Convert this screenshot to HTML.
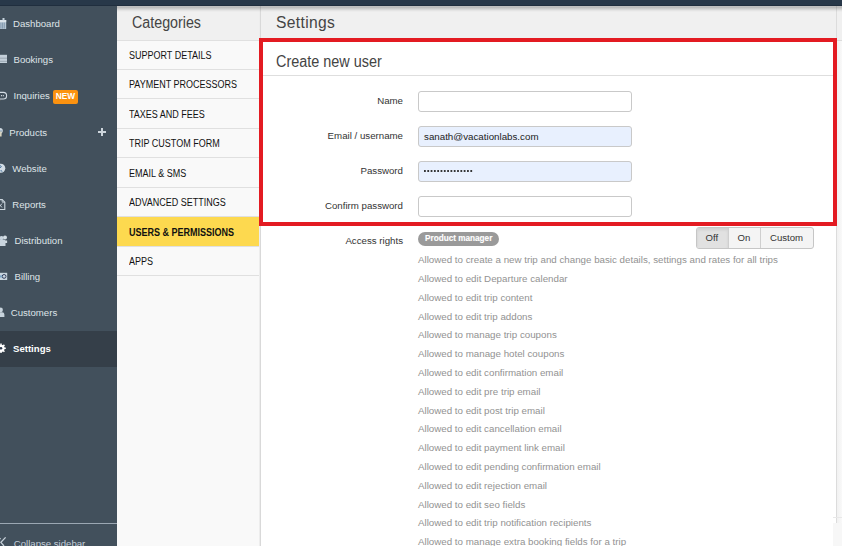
<!DOCTYPE html>
<html><head><meta charset="utf-8">
<style>
*{box-sizing:border-box;margin:0;padding:0}
html,body{width:842px;height:546px;overflow:hidden;background:#fff;font-family:"Liberation Sans",sans-serif}
.a{position:absolute;white-space:nowrap}
.topbar{position:absolute;left:0;top:0;width:842px;height:6px;background:#283849;border-bottom:1px solid #202e3e}
.sidebar{position:absolute;left:0;top:6px;width:117px;height:540px;background:#42505c}
.nt{position:absolute;white-space:nowrap;color:#dfe4e8;font-size:9.6px;line-height:12px}
.act{position:absolute;left:0;top:331px;width:117px;height:36px;background:#353f49}
.newb{position:absolute;left:53px;top:90px;width:25px;height:14px;background:#fb9210;border-radius:2px;color:#fff;font-weight:bold;font-size:8.3px;line-height:12px;text-align:center}
.collapse{position:absolute;left:0;top:523px;width:117px;height:1px;background:#9ba7b3}
.cat{position:absolute;left:117px;top:6px;width:142px;height:540px;background:#f9f9f9}
.catborder{position:absolute;left:259px;top:6px;width:2px;height:540px;background:linear-gradient(90deg,#ededed 50%,#d9d9d9 50%)}
.cathead{position:absolute;left:117px;top:6px;width:142px;height:34px;background:#f0f0f0}
.hl{position:absolute;height:1px;background:#e0e0e0}
.ct{position:absolute;left:128.5px;font-size:10px;line-height:12px;color:#111;transform:scaleX(0.9);transform-origin:0 0;white-space:nowrap}
.sel{position:absolute;left:117px;top:217px;width:142px;height:29px;background:#fdd94f}
.mainhead{position:absolute;left:261px;top:6px;width:581px;height:34px;background:#f0f0f0}
.shadow{position:absolute;left:117px;top:6px;width:725px;height:6px;background:linear-gradient(rgba(0,0,0,0.2),rgba(0,0,0,0.21) 1.5px,rgba(0,0,0,0.13) 3px,rgba(0,0,0,0.05) 4.5px,rgba(0,0,0,0) 6px)}
.h1{position:absolute;font-size:15.6px;line-height:18px;color:#444;white-space:nowrap}
.redbox{position:absolute;left:259px;top:38px;width:578px;height:188px;border:4px solid #e31b22}
.sep{position:absolute;left:263px;top:75px;width:570px;height:1px;background:#dedede}
.lbl{position:absolute;left:200px;width:203px;text-align:right;font-size:9.7px;line-height:12px;color:#333;white-space:nowrap}
.inp{position:absolute;left:418px;width:214px;height:20.5px;border:1px solid #c9c9c9;border-radius:3px;background:#fff}
.inp.fill{background:#e8f0fe}
.it{position:absolute;font-size:9.75px;line-height:12px;color:#222;white-space:nowrap}
.perm{position:absolute;left:418px;font-size:9.75px;line-height:12px;color:#929292;white-space:nowrap}
.badge{position:absolute;left:418px;top:232px;width:81px;height:14px;background:#9a9a9a;border-radius:7px}
.bt{position:absolute;left:425px;top:231.5px;-webkit-text-stroke:0.15px #fff;width:68px;font-weight:bold;font-size:8.2px;line-height:14px;color:#fff;white-space:nowrap}
.btng{position:absolute;left:696px;top:227px;width:118px;height:21.5px;border:1px solid #c6c6c6;border-radius:3px;background:#f4f4f4;overflow:hidden}
.boff{position:absolute;left:0;top:0;width:30.6px;height:20px;background:#e1e1e1;box-shadow:inset 0 2px 3px rgba(0,0,0,0.08)}
.bsep{position:absolute;top:0;width:1px;height:20px;background:#cfcfcf}
.btt{position:absolute;font-size:9.6px;line-height:12px;color:#333;white-space:nowrap}
.rscroll{position:absolute;left:836px;top:41px;width:6px;height:482px;background:linear-gradient(90deg,#f0f0f0,#f9f9f9)}
.rline{position:absolute;left:836px;top:6px;width:1px;height:517px;background:#dcdcdc}
.rbot{position:absolute;left:833px;top:523px;width:9px;height:23px;background:#f7f7f7}
</style></head><body>
<div class="topbar"></div>
<div class="sidebar"></div>
<div class="act"></div>

<!-- sidebar icons -->
<svg class="a" style="left:0;top:0" width="12" height="546" viewBox="0 0 12 546">
<g>
<rect x="-2" y="20" width="8.2" height="9" rx="0.6" fill="#b6c6d4"/><rect x="-2" y="20" width="8.2" height="2.2" fill="#dde5eb"/>
<path d="M0.9 22.6v6M2.6 22.6v6M4.3 22.6v6" stroke="#6d87a0" stroke-width="0.7"/><rect x="2.5" y="18" width="2" height="2.4" fill="#c5d3de"/>
<rect x="-1" y="54.8" width="8" height="8.2" fill="#c3cfd9"/><path d="M-1 58.2h8M-1 61.3h8" stroke="#7d8c99" stroke-width="0.6"/>
<rect x="-4" y="92.4" width="10.6" height="6.6" rx="3.3" fill="none" stroke="#d3dce4" stroke-width="1.1"/><circle cx="1.5" cy="95.7" r="0.6" fill="#e3eaef"/><circle cx="3.3" cy="95.7" r="0.6" fill="#e3eaef"/><path d="M-1 99l1.2 1" stroke="#b0a070" stroke-width="0.8"/>
<circle cx="0" cy="130.8" r="2.8" fill="#cfd9e1"/><rect x="-1" y="131" width="2.6" height="5.5" fill="#d8d4c0"/><path d="M-1 131h3" stroke="#6f90b0" stroke-width="0.8"/>
<circle cx="0.8" cy="168.3" r="4.5" fill="#d2dce4"/><path d="M-2 166.5c1 -1.2 2.5 -1 3.2 -0.2c0.6 0.8 -1 1.5 -2.2 1.5M0.5 170.8c0.8 -0.5 1.6 0 1.4 0.9" stroke="#3d6a96" stroke-width="1" fill="none"/>
<path d="M-3 199.6h5.2l2.6 2.6v7.3h-7.8z" fill="none" stroke="#cbd6de" stroke-width="1.1"/><path d="M-1 203.5l3 4M2 203.5l-3 4" stroke="#c4cfd8" stroke-width="0.9"/><path d="M2.2 199.6v2.6h2.6" fill="none" stroke="#cbd6de" stroke-width="0.9"/>
<path d="M-1 246v-4.5a2 2 0 0 1 2 -2h2.5a2 2 0 0 1 2 2v4.5z" fill="#c8d4de"/><circle cx="1.6" cy="238" r="2" fill="#c8d4de"/><circle cx="5" cy="237.4" r="2" fill="#d3dde4"/><path d="M4.5 240.5h2.6v2.5h-2z" fill="#cdd8e0"/>
<rect x="-1" y="272.8" width="8.2" height="7.2" fill="#c9d5de"/><circle cx="4.1" cy="276.4" r="1.9" fill="none" stroke="#303d5c" stroke-width="1"/><circle cx="1" cy="276.4" r="1.2" fill="#7aa2c4"/>
<circle cx="0.6" cy="309.9" r="2.3" fill="#c7d3dc"/><path d="M-3 317v-2.4a2.4 2.4 0 0 1 2.4 -2.4h2.6a2.4 2.4 0 0 1 2.4 2.4v2.4z" fill="#c7d3dc"/>
<circle cx="1" cy="348.3" r="3.6" fill="#fff"/><path d="M1 343.5v9.6M-3.8 348.3h9.6M-2.4 344.9l6.8 6.8M4.4 344.9l-6.8 6.8" stroke="#fff" stroke-width="1.5"/><circle cx="1" cy="348.3" r="1.3" fill="#2e3a4e"/>
</g></svg>

<div class="nt" style="left:13px;top:17.6px">Dashboard</div>
<div class="nt" style="left:13.5px;top:53.6px">Bookings</div>
<div class="nt" style="left:13.5px;top:89.8px">Inquiries</div>
<div class="newb">NEW</div>
<div class="nt" style="left:9.3px;top:126.5px">Products</div>
<svg class="a" style="left:97px;top:127px" width="10" height="10" viewBox="0 0 10 10"><path d="M1 5h8M5 1v8" stroke="#cdd5dc" stroke-width="2"/></svg>
<div class="nt" style="left:12.3px;top:162.6px">Website</div>
<div class="nt" style="left:12.3px;top:198.9px">Reports</div>
<div class="nt" style="left:14.5px;top:234.6px">Distribution</div>
<div class="nt" style="left:14.5px;top:270.9px">Billing</div>
<div class="nt" style="left:10.8px;top:306.8px">Customers</div>
<div class="nt" style="left:13px;top:342.9px;color:#fff;font-weight:bold">Settings</div>
<div class="collapse"></div>
<svg class="a" style="left:0;top:530px" width="8" height="16" viewBox="0 0 8 16"><path d="M5.6 7.4 L0.9 12.3 L4 16" fill="none" stroke="#c7d1da" stroke-width="1.3"/><path d="M-1 7.5L0.6 9" stroke="#c7d1da" stroke-width="1.1"/></svg>
<div class="nt" style="left:13.8px;top:538px;color:#c4ced8">Collapse sidebar</div>

<!-- categories -->
<div class="cat"></div>
<div class="cathead"></div>
<div class="catborder"></div>
<div class="h1" style="left:132.3px;top:13.5px;transform:scaleX(0.915);transform-origin:0 0">Categories</div>
<div class="hl" style="left:117px;top:40px;width:142px"></div>
<div class="hl" style="left:117px;top:69px;width:142px"></div>
<div class="hl" style="left:117px;top:98px;width:142px"></div>
<div class="hl" style="left:117px;top:128px;width:142px"></div>
<div class="hl" style="left:117px;top:157px;width:142px"></div>
<div class="hl" style="left:117px;top:187px;width:142px"></div>
<div class="hl" style="left:117px;top:216px;width:142px"></div>
<div class="sel"></div>
<div class="hl" style="left:117px;top:246px;width:142px"></div>
<div class="hl" style="left:117px;top:275px;width:142px"></div>
<div class="ct" style="top:49.6px">SUPPORT DETAILS</div>
<div class="ct" style="top:78.7px">PAYMENT PROCESSORS</div>
<div class="ct" style="top:108.5px">TAXES AND FEES</div>
<div class="ct" style="top:137.8px">TRIP CUSTOM FORM</div>
<div class="ct" style="top:167.7px">EMAIL &amp; SMS</div>
<div class="ct" style="top:196.6px">ADVANCED SETTINGS</div>
<div class="ct" style="top:226.7px;font-weight:bold;color:#111;transform:scaleX(0.9)">USERS &amp; PERMISSIONS</div>
<div class="ct" style="top:255.6px">APPS</div>

<!-- main -->
<div class="mainhead"></div>
<div class="hl" style="left:261px;top:40px;width:581px;background:#dcdcdc"></div>
<div class="rscroll"></div>
<div class="rline"></div>
<div class="rbot"></div>
<div class="hl" style="left:833px;top:517px;width:9px;background:#e8e8e8"></div>
<div class="shadow"></div>
<div class="h1" style="left:276px;top:13.5px;letter-spacing:0.35px">Settings</div>
<div class="redbox"></div>
<div class="h1" style="left:276px;top:52.6px;transform:scaleX(0.925);transform-origin:0 0">Create new user</div>
<div class="sep"></div>

<div class="lbl" style="top:94.6px">Name</div>
<div class="lbl" style="top:129.5px">Email / username</div>
<div class="lbl" style="top:164.6px">Password</div>
<div class="lbl" style="top:199.5px">Confirm password</div>
<div class="lbl" style="top:234.9px">Access rights</div>

<div class="inp" style="top:91px"></div>
<div class="inp fill" style="top:126.2px"></div>
<div class="inp fill" style="top:161.2px"></div>
<div class="inp" style="top:196.2px"></div>
<div class="it" style="left:424px;top:130.6px">sanath@vacationlabs.com</div>
<svg class="a" style="left:423px;top:169px" width="52" height="4" viewBox="0 0 52 4"><g fill="#222"><rect x="1.00" y="1.1" width="1.8" height="1.8"/><rect x="4.31" y="1.1" width="1.8" height="1.8"/><rect x="7.62" y="1.1" width="1.8" height="1.8"/><rect x="10.93" y="1.1" width="1.8" height="1.8"/><rect x="14.24" y="1.1" width="1.8" height="1.8"/><rect x="17.55" y="1.1" width="1.8" height="1.8"/><rect x="20.86" y="1.1" width="1.8" height="1.8"/><rect x="24.17" y="1.1" width="1.8" height="1.8"/><rect x="27.48" y="1.1" width="1.8" height="1.8"/><rect x="30.79" y="1.1" width="1.8" height="1.8"/><rect x="34.10" y="1.1" width="1.8" height="1.8"/><rect x="37.41" y="1.1" width="1.8" height="1.8"/><rect x="40.72" y="1.1" width="1.8" height="1.8"/><rect x="44.03" y="1.1" width="1.8" height="1.8"/><rect x="47.34" y="1.1" width="1.8" height="1.8"/></g></svg>

<div class="badge"></div>
<div class="bt">Product manager</div>

<div class="btng"><div class="boff"></div><div class="bsep" style="left:30.6px"></div><div class="bsep" style="left:63.2px"></div></div>
<div class="btt" style="left:705.5px;top:231.5px">Off</div>
<div class="btt" style="left:737.5px;top:231.5px">On</div>
<div class="btt" style="left:770px;top:231.5px">Custom</div>

<div class="perm" style="top:254.1px">Allowed to create a new trip and change basic details, settings and rates for all trips</div>
<div class="perm" style="top:272.9px">Allowed to edit Departure calendar</div>
<div class="perm" style="top:291.7px">Allowed to edit trip content</div>
<div class="perm" style="top:310.5px">Allowed to edit trip addons</div>
<div class="perm" style="top:329.3px">Allowed to manage trip coupons</div>
<div class="perm" style="top:348.1px">Allowed to manage hotel coupons</div>
<div class="perm" style="top:366.9px">Allowed to edit confirmation email</div>
<div class="perm" style="top:385.7px">Allowed to edit pre trip email</div>
<div class="perm" style="top:404.5px">Allowed to edit post trip email</div>
<div class="perm" style="top:423.3px">Allowed to edit cancellation email</div>
<div class="perm" style="top:442.1px">Allowed to edit payment link email</div>
<div class="perm" style="top:460.9px">Allowed to edit pending confirmation email</div>
<div class="perm" style="top:479.7px">Allowed to edit rejection email</div>
<div class="perm" style="top:498.5px">Allowed to edit seo fields</div>
<div class="perm" style="top:517.3px">Allowed to edit trip notification recipients</div>
<div class="perm" style="top:536.1px">Allowed to manage extra booking fields for a trip</div>
</body></html>
